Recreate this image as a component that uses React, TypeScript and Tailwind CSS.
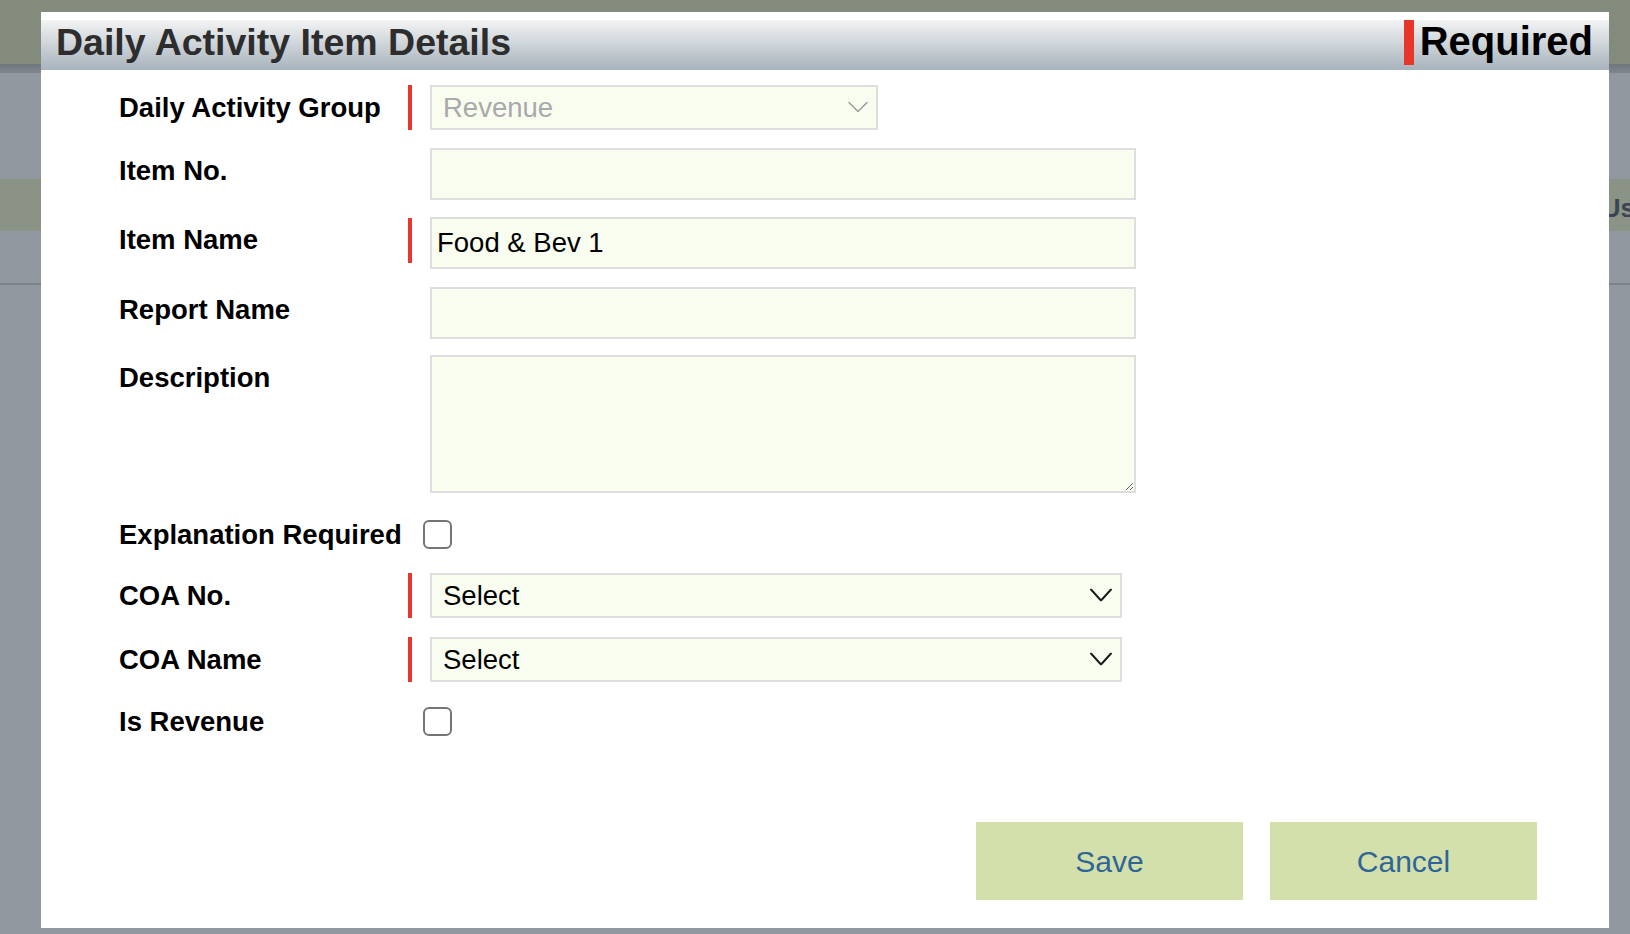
import { ReactNode } from "react";

const fieldBox =
  "border-2 border-[#dedede] bg-[#f8fdf0] text-[27.5px] text-black outline-none";

function Chevron({ color, w, h, stroke }: { color: string; w: number; h: number; stroke: number }) {
  return (
    <svg
      width={w}
      height={h}
      viewBox={`0 0 ${w} ${h}`}
      fill="none"
      className="pointer-events-none absolute right-[10px] top-1/2 -translate-y-1/2"
    >
      <path
        d={`M1 1 L${w / 2} ${h - 1} L${w - 1} 1`}
        stroke={color}
        strokeWidth={stroke}
        strokeLinecap="round"
        strokeLinejoin="round"
      />
    </svg>
  );
}

function Row({
  label,
  required,
  center,
  className,
  children,
}: {
  label: string;
  required?: boolean;
  center?: boolean;
  className?: string;
  children: ReactNode;
}) {
  return (
    <div className={`flex ${center ? "items-center" : "items-start"} ${className ?? ""}`}>
      <div
        className={`w-[289px] shrink-0 text-[27.5px] font-bold leading-[32px] text-black ${
          center ? "-mb-[1px] pt-[1px]" : "mt-[7px]"
        }`}
      >
        {label}
      </div>
      <div className="flex w-[22px] shrink-0 self-start">
        {required && <div className="mt-[1px] h-[45px] w-[4px] bg-[#e8372b]" />}
      </div>
      {children}
    </div>
  );
}

function Checkbox() {
  return (
    <input
      type="checkbox"
      className="-ml-[7px] h-[29px] w-[29px] appearance-none rounded-[6px] border-2 border-[#757575] bg-white"
    />
  );
}

export default function App() {
  return (
    <div className="relative h-[934px] w-[1630px] overflow-hidden font-['Liberation_Sans',Arial,sans-serif]">
      {/* dimmed page behind the dialog */}
      <div className="flex h-full flex-col">
        <div className="h-[64px] bg-[#838c7c]" />
        <div className="h-[9px] bg-linear-to-b from-[#6f767d] to-[#80868d]" />
        <div className="h-[106px] bg-[#91989f]" />
        <div className="flex h-[52px] items-center justify-end bg-[#8a9386] pt-[6px]">
          <span className="-mr-[5px] whitespace-nowrap text-[26px] font-bold text-[#3b4450]">Us</span>
        </div>
        <div className="h-[52px] bg-[#91989f]" />
        <div className="h-[2px] bg-[#7c8288]" />
        <div className="flex-1 bg-[#91989f]" />
      </div>

      {/* dialog */}
      <div className="absolute left-[41px] top-[12px] flex h-[916px] w-[1568px] flex-col bg-white pt-[8px]">
        <div className="flex h-[50px] items-start justify-between bg-linear-to-b from-[#f3f4f4] to-[#a8b3bc] pl-[15px] pr-[16px]">
          <h1 className="pt-[1px] text-[37.5px] font-bold leading-[42px] text-[#2d2d2d]">
            Daily Activity Item Details
          </h1>
          <div className="flex items-start gap-[6px]">
            <div className="h-[45px] w-[10px] bg-[#e8352a]" />
            <span className="text-[40px] font-bold leading-[42px] text-black">Required</span>
          </div>
        </div>

        <div className="flex flex-1 flex-col pl-[78px]">
          <Row label="Daily Activity Group" required center className="mt-[14px]">
            <div className="relative">
              <select
                disabled
                className={`${fieldBox} h-[45px] w-[448px] appearance-none pl-[11px] text-[#a9a9a9] disabled:text-[#a9a9a9]`}
              >
                <option>Revenue</option>
              </select>
              <Chevron color="#9c9c9c" w={20} h={11} stroke={1.5} />
            </div>
          </Row>

          <Row label="Item No." className="mt-[18px]">
            <input type="text" className={`${fieldBox} h-[52px] w-[706px] px-[5px]`} />
          </Row>

          <Row label="Item Name" required className="mt-[17px]">
            <input
              type="text"
              defaultValue="Food & Bev 1"
              className={`${fieldBox} h-[52px] w-[706px] px-[5px]`}
            />
          </Row>

          <Row label="Report Name" className="mt-[18px]">
            <input type="text" className={`${fieldBox} h-[52px] w-[706px] px-[5px]`} />
          </Row>

          <Row label="Description" className="mt-[16px]">
            <textarea className={`${fieldBox} h-[138px] w-[706px] resize p-[5px]`} />
          </Row>

          <Row label="Explanation Required" center className="mt-[25px]">
            <Checkbox />
          </Row>

          <Row label="COA No." required center className="mt-[22px]">
            <div className="relative">
              <select className={`${fieldBox} h-[45px] w-[692px] appearance-none pl-[11px]`}>
                <option>Select</option>
              </select>
              <Chevron color="#1c1c1c" w={22} h={13} stroke={2} />
            </div>
          </Row>

          <Row label="COA Name" required center className="mt-[18px]">
            <div className="relative">
              <select className={`${fieldBox} h-[45px] w-[692px] appearance-none pl-[11px]`}>
                <option>Select</option>
              </select>
              <Chevron color="#1c1c1c" w={22} h={13} stroke={2} />
            </div>
          </Row>

          <Row label="Is Revenue" center className="mt-[23px]">
            <Checkbox />
          </Row>

          <div className="mt-[85px] flex justify-end gap-[27px] pr-[72px]">
            <button className="h-[78px] w-[267px] bg-[#d4e0ab] text-[30px] text-[#2f6597]">Save</button>
            <button className="h-[78px] w-[267px] bg-[#d4e0ab] text-[30px] text-[#2f6597]">Cancel</button>
          </div>
        </div>
      </div>
    </div>
  );
}
